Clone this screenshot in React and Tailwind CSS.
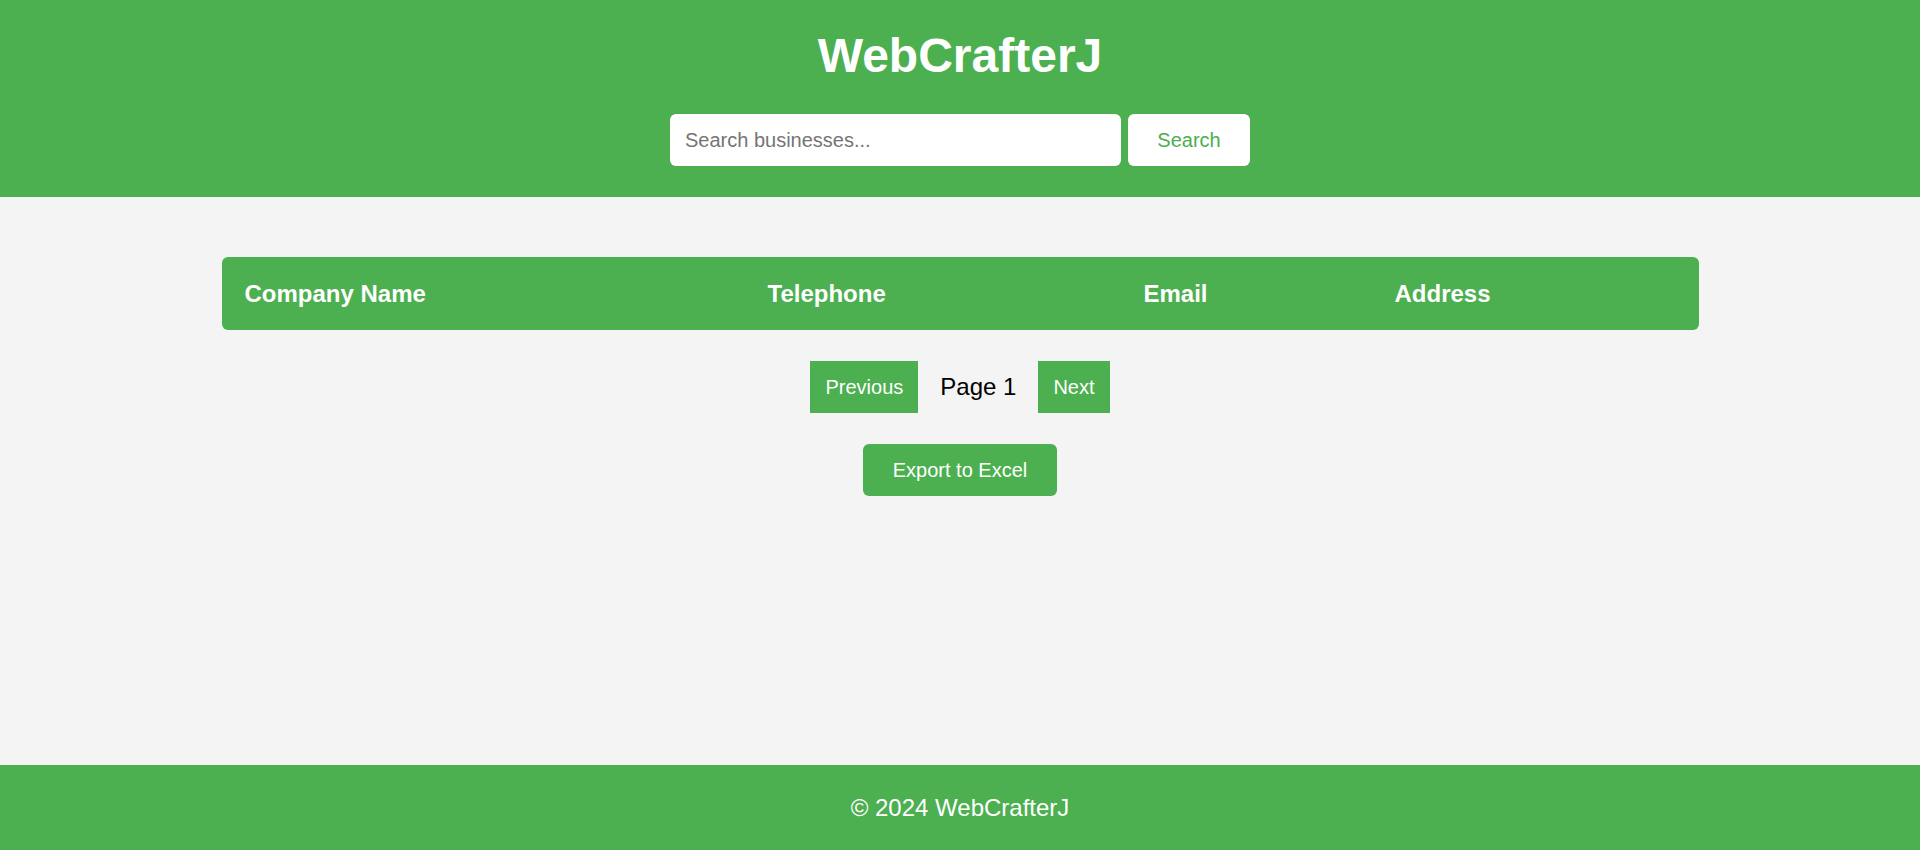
import { useState } from 'react';

export default function App() {
  const [query, setQuery] = useState('');
  const [page, setPage] = useState(1);

  return (
    <div className="min-h-screen flex flex-col bg-[#f4f4f4] font-['Liberation_Sans',Arial,sans-serif]">
      {/* Header */}
      <header className="bg-[#4caf50] h-[197px] flex flex-col items-center pt-[28px]">
        <h1 className="text-white text-[48px] font-bold leading-[55px]">WebCrafterJ</h1>
        <form
          onSubmit={(e) => e.preventDefault()}
          className="mt-[31px] flex items-center gap-[7px]"
        >
          <input
            type="text"
            value={query}
            onChange={(e) => setQuery(e.target.value)}
            placeholder="Search businesses..."
            className="w-[451px] h-[52px] px-[15px] bg-white rounded-[6px] text-[20px] text-black placeholder:text-[#757575] outline-none"
          />
          <button
            type="submit"
            className="w-[122px] h-[52px] bg-white rounded-[6px] text-[20px] text-[#4caf50]"
          >
            Search
          </button>
        </form>
      </header>

      {/* Main */}
      <main className="flex-1 flex flex-col items-center pt-[60px]">
        <div className="w-[1477px] h-[73px] bg-[#4caf50] rounded-[6px] grid grid-cols-[523px_376px_251px_1fr] items-center text-white text-[24px] font-bold">
          <div className="pl-[23px]">Company Name</div>
          <div className="pl-[23px]">Telephone</div>
          <div className="pl-[23px]">Email</div>
          <div className="pl-[23px]">Address</div>
        </div>

        {/* Pagination */}
        <div className="mt-[31px] flex items-center">
          <button
            onClick={() => setPage(Math.max(1, page - 1))}
            className="h-[52px] px-[15px] bg-[#4caf50] text-white text-[20px]"
          >
            Previous
          </button>
          <span className="mx-[22px] text-[24px] text-black">Page {page}</span>
          <button
            onClick={() => setPage(page + 1)}
            className="h-[52px] px-[15px] bg-[#4caf50] text-white text-[20px]"
          >
            Next
          </button>
        </div>

        <button className="mt-[31px] h-[52px] px-[30px] bg-[#4caf50] text-white text-[20px] rounded-[6px]">
          Export to Excel
        </button>
      </main>

      {/* Footer */}
      <footer className="bg-[#4caf50] h-[85px] flex items-center justify-center text-white text-[24px]">
        © 2024 WebCrafterJ
      </footer>
    </div>
  );
}
